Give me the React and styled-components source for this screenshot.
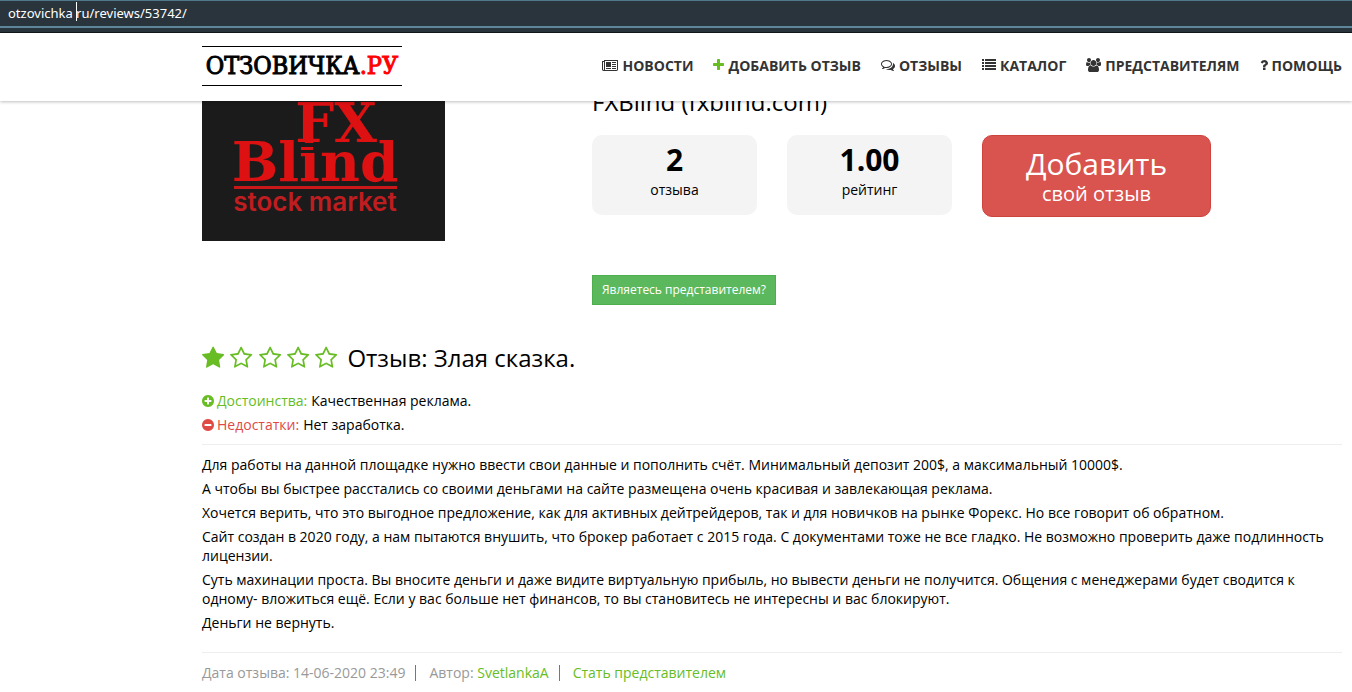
import React from 'react'
import styled, { createGlobalStyle } from 'styled-components'

const ICONS = {
  news: {
    box: '0 0 2048 1792',
    d: 'M1024 1024h-384v-384h384v384zm128 256v128h-640v-128h640zm0-768v640h-640v-640h640zm640 768v128h-512v-128h512zm0-256v128h-512v-128h512zm0-256v128h-512v-128h512zm0-256v128h-512v-128h512zm-1536 960v-960h-128v960q0 26 19 45t45 19 45-19 19-45zm1664 0v-1088h-1536v1088q0 33-11 64h1483q26 0 45-19t19-45zm128-1216v1216q0 80-56 136t-136 56h-1664q-80 0-136-56t-56-136v-1088h256v-128h1792z',
  },
  plus: {
    box: '192 0 1408 1792',
    d: 'M1600 736v192q0 40-28 68t-68 28h-416v416q0 40-28 68t-68 28h-192q-40 0-68-28t-28-68v-416h-416q-40 0-68-28t-28-68v-192q0-40 28-68t68-28h416v-416q0-40 28-68t68-28h192q40 0 68 28t28 68v416h416q40 0 68 28t28 68z',
  },
  comments: {
    box: '0 0 1792 1792',
    d: 'M704 384q-153 0-286 52t-211.5 141-78.5 191q0 82 53 158t149 132l97 56-35 84q34-20 62-39l44-31 53 10q78 14 153 14 153 0 286-52t211.5-141 78.5-191-78.5-191-211.5-141-286-52zm0-128q191 0 353.5 68.5t256.5 186.5 94 257-94 257-256.5 186.5-353.5 68.5q-86 0-176-16-124 88-278 128-36 9-86 16h-3q-11 0-20.5-8t-11.5-21q-1-3-1-6.5t.5-6.5 2-6l2.5-5 3.5-5.5 4-5 4.5-5 4-4.5q5-6 23-25t26-29.5 22.5-29 25-38.5 20.5-44q-124-72-195-177t-71-224q0-139 94-257t256.5-186.5 353.5-68.5zm822 1169q10 24 20.5 44t25 38.5 22.5 29 26 29.5 23 25q1 1 4 4.5t4.5 5 4 5 3.5 5.5l2.5 5 2 6 .5 6.5-1 6.5q-3 14-13 22t-22 7q-50-7-86-16-154-40-278-128-90 16-176 16-271 0-472-132 58 4 88 4 161 0 309-45t264-129q125-92 192-212t67-254q0-77-23-152 129 71 204 178t75 230q0 120-71 224.5t-195 176.5z',
  },
  list: {
    box: '0 0 1792 1792',
    d: 'M0 1280h256v256h-256zM0 896h256v256h-256zM0 512h256v256h-256zM384 1280h1408v256h-1408zM0 128h256v256h-256zM384 896h1408v256h-1408zM384 512h1408v256h-1408zM384 128h1408v256h-1408z',
  },
  users: {
    box: '0 0 1920 1792',
    d: 'M593 896q-162 5-265 128h-134q-82 0-138-40.5t-56-118.5q0-353 124-353 6 0 43.5 21t97.5 42.5 119 21.5q67 0 133-23-5 37-5 66 0 159 90 291zm1071 637q0 120-73 189.5t-194 69.5h-874q-121 0-194-69.5t-73-189.5q0-53 3.5-103.5t14-109 26.5-108.5 43-97.5 62-81 85.5-53.5 111.5-20q10 0 43 21.5t73 48 107 48 135 21.5 135-21.5 107-48 73-48 43-21.5q61 0 111.5 20t85.5 53.5 62 81 43 97.5 26.5 108.5 14 109 3.5 103.5zm-1024-1277q0 106-75 181t-181 75-181-75-75-181 75-181 181-75 181 75 75 181zm704 384q0 159-112.5 271.5t-271.5 112.5-271.5-112.5-112.5-271.5 112.5-271.5 271.5-112.5 271.5 112.5 112.5 271.5zm576 225q0 78-56 118.5t-138 40.5h-134q-103-123-265-128 90-132 90-291 0-29-5-66 66 23 133 23 59 0 119-21.5t97.5-42.5 43.5-21q124 0 124 353zm-128-609q0 106-75 181t-181 75-181-75-75-181 75-181 181-75 181 75 75 181z',
  },
  question: {
    box: '384 0 1024 1792',
    d: 'M1088 1256v240q0 16-12 28t-28 12h-240q-16 0-28-12t-12-28v-240q0-16 12-28t28-12h240q16 0 28 12t12 28zm316-600q0 54-15.5 101t-35 76.5-55 59.5-57.5 43.5-61 35.5q-41 23-68.5 65t-27.5 67q0 17-12 32.5t-28 15.5h-240q-15 0-25.5-18.5t-10.5-37.5v-45q0-83 65-156.5t143-108.5q59-27 84-56t25-76q0-42-46.5-74t-107.5-32q-65 0-108 29-35 25-107 115-13 16-31 16-12 0-25-8l-164-125q-13-10-15.5-25t5.5-28q160-266 464-266 80 0 161 31t146 83 106 127.5 41 158.5z',
  },
  star: {
    box: '64 0 1664 1792',
    d: 'M1728 647q0 22-26 48l-363 354 86 500q1 7 1 20 0 21-10.5 35.5t-30.5 14.5q-19 0-40-12l-449-236-449 236q-22 12-40 12-21 0-31.5-14.5t-10.5-35.5q0-6 2-20l86-500-364-354q-25-27-25-48 0-37 56-46l502-73 225-455q19-41 49-41t49 41l225 455 502 73q56 9 56 46z',
  },
  starEmpty: {
    box: '64 0 1664 1792',
    d: 'M1201 1004l306-297-422-62-189-382-189 382-422 62 306 297-73 421 378-199 377 199zm527-357q0 22-26 48l-363 354 86 500q1 7 1 20 0 50-41 50-19 0-40-12l-449-236-449 236q-22 12-40 12-21 0-31.5-14.5t-10.5-35.5q0-6 2-20l86-500-364-354q-25-27-25-48 0-37 56-46l502-73 225-455q19-41 49-41t49 41l225 455 502 73q56 9 56 46z',
  },
  plusCircle: {
    box: '128 0 1536 1792',
    d: 'M1344 960v-128q0-26-19-45t-45-19h-256v-256q0-26-19-45t-45-19h-128q-26 0-45 19t-19 45v256h-256q-26 0-45 19t-19 45v128q0 26 19 45t45 19h256v256q0 26 19 45t45 19h128q26 0 45-19t19-45v-256h256q26 0 45-19t19-45zm320-64q0 209-103 385.5t-279.5 279.5-385.5 103-385.5-103-279.5-279.5-103-385.5 103-385.5 279.5-279.5 385.5-103 385.5 103 279.5 279.5 103 385.5z',
  },
  minusCircle: {
    box: '128 0 1536 1792',
    d: 'M1344 960v-128q0-26-19-45t-45-19h-768q-26 0-45 19t-19 45v128q0 26 19 45t45 19h768q26 0 45-19t19-45zm320-64q0 209-103 385.5t-279.5 279.5-385.5 103-385.5-103-279.5-279.5-103-385.5 103-385.5 279.5-279.5 385.5-103 385.5 103 279.5 279.5 103 385.5z',
  },
}

const menu = [
  { icon: 'news', title: 'Новости' },
  { icon: 'plus', title: 'Добавить отзыв', color: '#67bd23' },
  { icon: 'comments', title: 'Отзывы' },
  { icon: 'list', title: 'Каталог' },
  { icon: 'users', title: 'Представителям' },
  { icon: 'question', title: 'Помощь' },
]

const stats = [
  { value: '2', label: 'отзыва' },
  { value: '1.00', label: 'рейтинг' },
]

const review = [
  'Для работы на данной площадке нужно ввести свои данные и пополнить счёт. Минимальный депозит 200$, а максимальный 10000$.',
  'А чтобы вы быстрее расстались со своими деньгами на сайте размещена очень красивая и завлекающая реклама.',
  'Хочется верить, что это выгодное предложение, как для активных дейтрейдеров, так и для новичков на рынке Форекс. Но все говорит об обратном.',
  'Сайт создан в 2020 году, а нам пытаются внушить, что брокер работает с 2015 года. С документами тоже не все гладко. Не возможно проверить даже подлинность лицензии.',
  'Суть махинации проста. Вы вносите деньги и даже видите виртуальную прибыль, но вывести деньги не получится. Общения с менеджерами будет сводится к одному- вложиться ещё. Если у вас больше нет финансов, то вы становитесь не интересны и вас блокируют.',
  'Деньги не вернуть.',
]

const GlobalStyle = createGlobalStyle`
  * {
    box-sizing: border-box;
  }
  body {
    margin: 0;
    background: #fff;
    color: #000;
    font-family: 'Open Sans', sans-serif;
    font-size: 14px;
    line-height: 19px;
  }
  a {
    color: #67bd23;
    text-decoration: none;
  }
`

const AddressBar = styled.div`
  position: relative;
  height: 33px;
  background: #29343d;
  border-top: 1px solid #51788a;
  border-bottom: 1px solid #12181d;
`

const AddressInput = styled.input`
  display: block;
  width: 100%;
  height: 27px;
  padding: 0 8px 2px;
  border: 0;
  border-bottom: 2px solid #5d8798;
  background: transparent;
  color: #fff;
  font: 13px 'Noto Sans', sans-serif;
  outline: 0;
`

const Caret = styled.span`
  position: absolute;
  left: 76px;
  top: 1px;
  width: 1px;
  height: 19px;
  background: #fff;
`

const Header = styled.header`
  position: relative;
  z-index: 1;
  display: flex;
  align-items: center;
  justify-content: space-between;
  height: 68px;
  padding: 0 10px 2px 202px;
  background: #fff;
  box-shadow: 0 1px 3px rgba(0, 0, 0, 0.25);
`

const Brand = styled.a`
  width: 200px;
  height: 40px;
  border-top: 1px solid #000;
  border-bottom: 1px solid #000;
  color: #000;
  font: 25px 'DejaVu Serif Condensed', 'DejaVu Serif', serif;
  line-height: 38px;
  text-align: center;
  white-space: nowrap;
  -webkit-text-stroke: 1px currentColor;

  span {
    color: #f00;
  }
`

const Nav = styled.nav`
  display: flex;
  gap: 20px;
  padding-bottom: 2px;
`

const NavLink = styled.a`
  display: flex;
  align-items: center;
  gap: 4px;
  color: #333;
  font-weight: 700;
  text-transform: uppercase;
  white-space: nowrap;
`

const Svg = styled.svg`
  display: block;
  flex: none;
  height: ${(p) => p.$size}px;
  fill: ${(p) => p.$color || 'currentColor'};
`

const Content = styled.main`
  padding: 0 10px 12px 202px;
`

const Company = styled.section`
  display: flex;
  align-items: flex-start;
`

const LogoCell = styled.div`
  flex: 0 0 390px;
`

const CompanyLogo = styled.svg`
  display: block;
  width: 243px;
  height: 140px;
  background: #1b1b1b;
`

const CompanyInfo = styled.div`
  flex: 1;
`

/* the top of the title is scrolled under the header */
const CompanyName = styled.h1`
  margin: -12px 0 20px;
  font-size: 24px;
  font-weight: 400;
  line-height: 26px;
`

const StatRow = styled.div`
  display: flex;
  align-items: flex-start;
  gap: 30px;
`

const Stat = styled.div`
  width: 165px;
  height: 80px;
  padding-top: 5px;
  border-radius: 10px;
  background: #f4f4f5;
  text-align: center;
`

const StatValue = styled.div`
  font-size: 30px;
  font-weight: 700;
  line-height: 40px;
`

const AddButton = styled.button`
  width: 229px;
  height: 82px;
  padding: 6px 12px;
  border: 1px solid #d0423e;
  border-radius: 10px;
  background: #d9534f;
  color: #fff;
  font-family: inherit;
  font-size: 20px;
  line-height: 24px;

  span {
    display: block;
    font-size: 30px;
    line-height: 36px;
  }
`

const AgentButton = styled.button`
  display: block;
  height: 30px;
  margin-top: 58px;
  padding: 0 9px 2px;
  border: 1px solid #4cae4c;
  background: #5cb85c;
  color: #fff;
  font-family: inherit;
  font-size: 12px;
`

const ReviewHead = styled.div`
  display: flex;
  align-items: center;
  margin-top: 37px;
  height: 32px;
`

const Stars = styled.div`
  display: flex;
  gap: 6px;
  margin-right: 10px;
  color: #67bd23;
`

const ReviewTitle = styled.h2`
  margin: 0;
  font-size: 24px;
  font-weight: 400;
  line-height: 32px;
`

const Point = styled.p`
  display: flex;
  align-items: center;
  gap: 4px;
  margin: 0 0 5px;

  b {
    display: flex;
    align-items: center;
    gap: 3px;
    color: ${(p) => p.$color};
    font-weight: 400;
  }
`

const Points = styled.div`
  padding: 17px 0 5px;
  border-bottom: 1px solid #eee;
`

const Text = styled.div`
  padding: 10px 0 15px;
  border-bottom: 1px solid #eee;

  p {
    margin: 0 0 5px;
  }
`

const Meta = styled.footer`
  display: flex;
  align-items: center;
  padding-top: 10px;
  color: #999;
`

const MetaItem = styled.span`
  padding-right: 10px;

  & + & {
    padding-left: 13px;
    border-left: 1px solid #777;
    line-height: 16px;
  }
`

const Icon = ({ name, size = 14, color }) => (
  <Svg viewBox={ICONS[name].box} $size={size} $color={color} aria-hidden="true">
    <path d={ICONS[name].d} />
  </Svg>
)

const FxLogo = () => (
  <CompanyLogo viewBox="0 0 243 140" role="img" aria-label="FX Blind stock market">
    <g fill="#dd1012" fontFamily="'DejaVu Serif', serif" fontWeight="700">
      <text x="134" y="41" fontSize="55" textAnchor="middle">FX</text>
      <text x="113" y="80" fontSize="55" textAnchor="middle">Blind</text>
    </g>
    <rect x="97" y="42" width="16" height="9" fill="#1b1b1b" />
    <rect x="99" y="46" width="12" height="3" fill="#dd1012" />
    <rect x="32" y="85" width="163" height="3" fill="#c9171a" />
    <text x="113" y="110" fill="#c01d20" fontFamily="Inter, sans-serif" fontSize="26" fontWeight="600" textAnchor="middle">
      stock market
    </text>
  </CompanyLogo>
)

const App = () => {
  return (
    <>
      <GlobalStyle />
      <AddressBar>
        <AddressInput aria-label="Адрес" defaultValue="otzovichka ru/reviews/53742/" />
        <Caret />
      </AddressBar>
      <Header>
        <Brand href="#">ОТЗОВИЧКА<span>.РУ</span></Brand>
        <Nav>
          {menu.map((item) => (
            <NavLink href="#" key={item.title}>
              <Icon name={item.icon} color={item.color} />
              {item.title}
            </NavLink>
          ))}
        </Nav>
      </Header>
      <Content>
        <Company>
          <LogoCell>
            <FxLogo />
          </LogoCell>
          <CompanyInfo>
            <CompanyName>FXBlind (fxblind.com)</CompanyName>
            <StatRow>
              {stats.map((s) => (
                <Stat key={s.label}>
                  <StatValue>{s.value}</StatValue>
                  {s.label}
                </Stat>
              ))}
              <AddButton type="button"><span>Добавить</span>свой отзыв</AddButton>
            </StatRow>
            <AgentButton type="button">Являетесь представителем?</AgentButton>
          </CompanyInfo>
        </Company>
        <ReviewHead>
          <Stars role="img" aria-label="Оценка 1 из 5">
            {[1, 2, 3, 4, 5].map((n) => (
              <Icon key={n} name={n <= 1 ? 'star' : 'starEmpty'} size={24} />
            ))}
          </Stars>
          <ReviewTitle>Отзыв: Злая сказка.</ReviewTitle>
        </ReviewHead>
        <Points>
          <Point $color="#67bd23">
            <b><Icon name="plusCircle" /> Достоинства:</b> Качественная реклама.
          </Point>
          <Point $color="#e04a45">
            <b><Icon name="minusCircle" /> Недостатки:</b> Нет заработка.
          </Point>
        </Points>
        <Text>
          {review.map((p, i) => (
            <p key={i}>{p}</p>
          ))}
        </Text>
        <Meta>
          <MetaItem>Дата отзыва: 14-06-2020 23:49</MetaItem>
          <MetaItem>Автор: <a href="#">SvetlankaA</a></MetaItem>
          <MetaItem><a href="#">Стать представителем</a></MetaItem>
        </Meta>
      </Content>
    </>
  )
}

export default App
